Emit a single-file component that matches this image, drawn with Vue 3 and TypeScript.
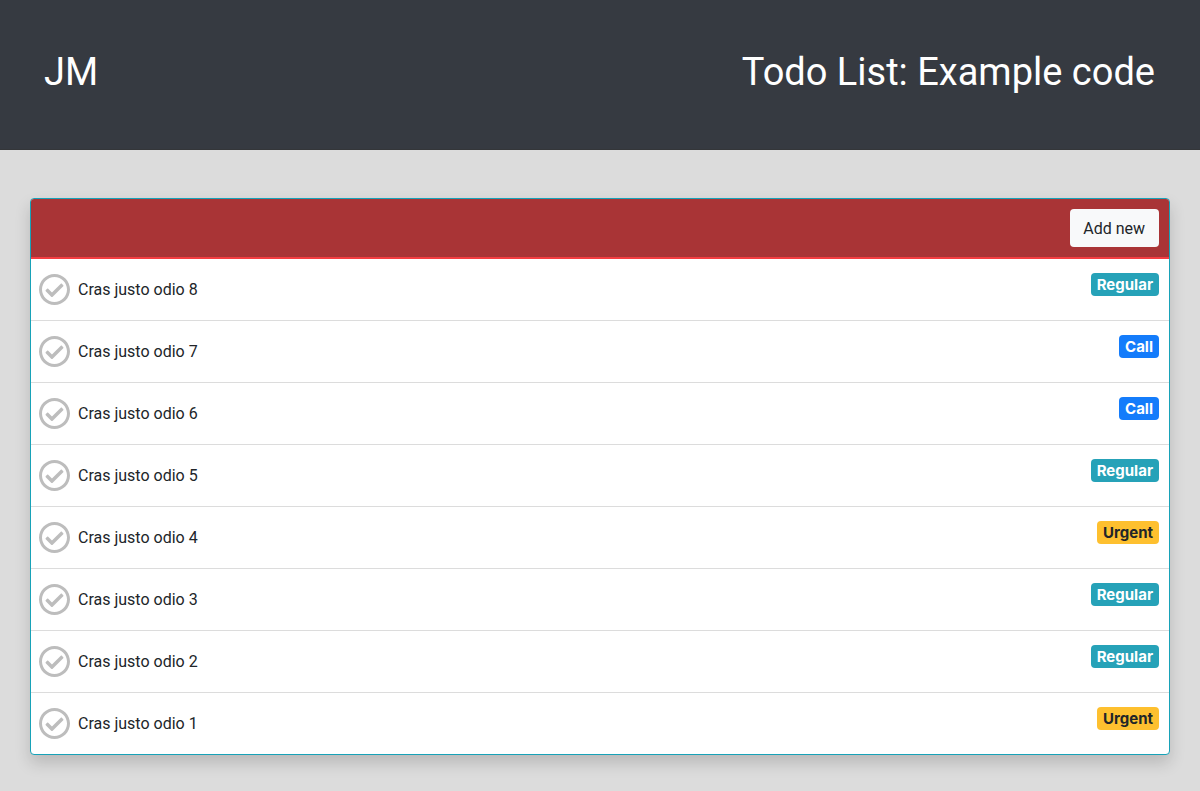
<script setup lang="ts">
type Kind = 'Regular' | 'Call' | 'Urgent'

interface Todo {
  id: number
  title: string
  kind: Kind
}

const kinds: Kind[] = ['Regular', 'Call', 'Call', 'Regular', 'Urgent', 'Regular', 'Regular', 'Urgent']

const todos: Todo[] = kinds.map((kind, i) => ({
  id: kinds.length - i,
  title: `Cras justo odio ${kinds.length - i}`,
  kind,
}))
</script>

<template>
  <header class="top">
    <h1 class="heading">JM</h1>
    <h1 class="heading">Todo List: Example code</h1>
  </header>
  <main class="content">
    <section class="card">
      <div class="card-head">
        <button type="button" class="add">Add new</button>
      </div>
      <ul class="list">
        <li v-for="todo in todos" :key="todo.id" class="item">
          <button type="button" class="check" :aria-label="`Complete ${todo.title}`">
            <svg viewBox="8 8 496 496" width="31" height="31" aria-hidden="true">
              <path
                fill="currentColor"
                d="M256 8C119.033 8 8 119.033 8 256s111.033 248 248 248 248-111.033 248-248S392.967 8 256 8zm0 48c110.532 0 200 89.451 200 200 0 110.532-89.451 200-200 200-110.532 0-200-89.451-200-200 0-110.532 89.451-200 200-200m140.204 130.267l-22.536-22.718c-4.667-4.705-12.265-4.736-16.97-.068L215.346 303.697l-59.792-60.277c-4.667-4.705-12.265-4.736-16.97-.069l-22.719 22.536c-4.705 4.667-4.736 12.265-.068 16.971l90.781 91.516c4.667 4.705 12.265 4.736 16.97.068l172.589-171.204c4.704-4.668 4.734-12.266.067-16.971z"
              />
            </svg>
          </button>
          <span class="title">{{ todo.title }}</span>
          <span class="badge" :class="todo.kind.toLowerCase()">{{ todo.kind }}</span>
        </li>
      </ul>
    </section>
  </main>
</template>

<style>
body {
  margin: 0;
  background: #dcdcdc;
}
</style>

<style scoped>
.top,
.content {
  font-family: Roboto, "Liberation Sans", sans-serif;
  color: #212529;
  box-sizing: border-box;
}
.top {
  display: flex;
  justify-content: space-between;
  padding: 48px 45px 53px 44px;
  background: #363a41;
  border-bottom: 1px solid #343639;
  color: #fff;
}
.heading {
  margin: 0;
  font-size: 38px;
  line-height: 48px;
  font-weight: 400;
}
.content {
  padding: 48px 30px 36px;
}
.card {
  border: 1px solid #17a2b8;
  border-radius: 4px;
  background: #fff;
  box-shadow: 0 8px 16px rgba(0, 0, 0, 0.16);
  overflow: hidden;
}
.card-head {
  display: flex;
  justify-content: flex-end;
  padding: 10px;
  background: #a93436;
  border-bottom: 2px solid #f53d41;
}
.add {
  padding: 8px 14px 6px 13px;
  border: 0;
  border-radius: 4px;
  background: #f8f9fa;
  color: #212529;
  font: 400 16px/24px Roboto, "Liberation Sans", sans-serif;
}
.list {
  margin: 0;
  padding: 0;
  list-style: none;
}
.item {
  display: flex;
  align-items: center;
  height: 61px;
  padding: 0 10px 0 8px;
}
.item + .item {
  border-top: 1px solid #dcdcdc;
}
.check {
  display: flex;
  padding: 0;
  border: 0;
  background: none;
  color: #bdbdbd;
}
.title {
  margin-left: 8px;
  font-size: 16px;
  line-height: 24px;
}
.badge {
  margin-left: auto;
  align-self: flex-start;
  margin-top: 14px;
  padding: 0 6px;
  border-radius: 4px;
  font-family: Inter, "Liberation Sans", sans-serif;
  font-size: 15px;
  line-height: 23px;
  font-weight: 700;
  color: #fff;
}
.regular {
  background: #26a2b8;
}
.call {
  background: #147cfb;
}
.urgent {
  background: #fec02f;
  color: #212529;
}
</style>
